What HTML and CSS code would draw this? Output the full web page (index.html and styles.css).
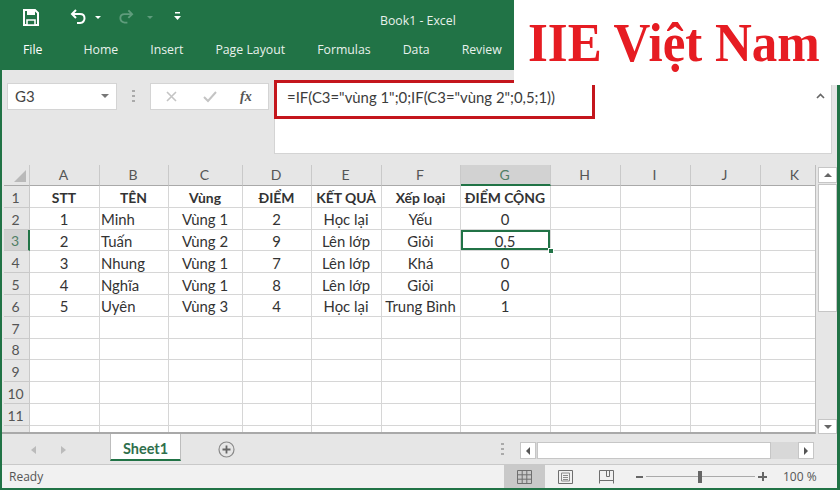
FILE: index.html
```html
<!DOCTYPE html>
<html lang="en">
<head>
    <meta charset="UTF-8">
    <title>Book1 - Excel</title>
    <link rel="stylesheet" href="styles.css">
</head>
<body>
<div class="window">
    <!-- title bar + ribbon tabs -->
    <header class="titlebar">
        <div class="qat">
            <svg class="ico-save" width="16" height="17" viewBox="0 0 16 17"><path d="M1 1h11l3 3v12H1z" fill="none" stroke="#fff" stroke-width="2"/><path d="M4 1h8v5H4z" fill="#fff"/><path d="M4 11h8v5H4z" fill="#217346" stroke="#fff" stroke-width="1.6"/></svg>
            <svg class="ico-undo" width="17" height="15" viewBox="0 0 17 15"><path d="M6 1 2 5l4 4M2 5h8c6 0 6 8 0 9H7" fill="none" stroke="#fff" stroke-width="2"/></svg>
            <span class="caret"></span>
            <svg class="ico-redo" width="16" height="15" viewBox="0 0 17 15"><path d="M11 1l4 4-4 4M15 5H7c-6 0-6 8 0 9h3" fill="none" stroke="#5f9c7c" stroke-width="2"/></svg>
            <span class="caret dim"></span>
            <svg class="ico-custom" width="7" height="9" viewBox="0 0 7 9"><path d="M1 0h5v1.500H1z" fill="#fff"/><path d="M0 4h7L3.500 8z" fill="#fff"/></svg>
            <span class="doc-title">Book1 - Excel</span>
        </div>
        <nav class="tabs">
            <span class="tab-file">File</span>
            <span>Home</span>
            <span>Insert</span>
            <span>Page Layout</span>
            <span>Formulas</span>
            <span>Data</span>
            <span>Review</span>
        </nav>
    </header>

    <!-- name box and formula bar -->
    <section class="formula-area">
        <div class="name-box">G3<span class="name-caret"></span></div>
        <span class="grip"></span>
        <div class="fx-box">
            <svg width="13" height="13" viewBox="0 0 13 13"><path d="M2 2l9 9M11 2l-9 9" stroke="#c4c4c4" stroke-width="1.600"/></svg>
            <svg width="14" height="12" viewBox="0 0 14 12"><path d="M1 6l4 4 8-9" fill="none" stroke="#c4c4c4" stroke-width="2"/></svg>
            <i class="fx">fx</i>
        </div>
        <div class="formula-box">
            <span class="formula-text">=IF(C3="vùng 1";0;IF(C3="vùng 2";0,5;1))</span>
            <svg class="collapse" width="9" height="6" viewBox="0 0 9 6"><path d="M1 5l3.500-3.500L8 5" fill="none" stroke="#666" stroke-width="1.600"/></svg>
            <div class="red-box"></div>
        </div>
    </section>

    <!-- worksheet -->
    <section class="sheet-row">
        <div class="sheet">
            <table class="cells">
                <colgroup>
                    <col class="c-row"><col class="c-a"><col class="c-b"><col class="c-c"><col class="c-d"><col class="c-e"><col class="c-f"><col class="c-g"><col class="c-h"><col class="c-h"><col class="c-h"><col class="c-h">
                </colgroup>
                <thead>
                    <tr>
                        <th class="corner"><span class="tri"></span></th>
                        <th>A</th><th>B</th><th>C</th><th>D</th><th>E</th><th>F</th><th class="sel-col">G</th><th>H</th><th>I</th><th>J</th><th>K</th>
                    </tr>
                </thead>
                <tbody>
                    <tr class="bold"><th>1</th><td class="mid">STT</td><td class="mid">TÊN</td><td class="mid">Vùng</td><td class="mid">ĐIỂM</td><td class="mid">KẾT QUẢ</td><td class="mid">Xếp loại</td><td class="mid">ĐIỂM CỘNG</td><td></td><td></td><td></td><td></td></tr>
                    <tr><th>2</th><td class="mid">1</td><td>Minh</td><td class="mid">Vùng 1</td><td class="mid">2</td><td class="mid">Học lại</td><td class="mid">Yếu</td><td class="mid">0</td><td></td><td></td><td></td><td></td></tr>
                    <tr><th class="sel-row">3</th><td class="mid">2</td><td>Tuấn</td><td class="mid">Vùng 2</td><td class="mid">9</td><td class="mid">Lên lớp</td><td class="mid">Giỏi</td><td class="mid active">0,5<span class="handle"></span></td><td></td><td></td><td></td><td></td></tr>
                    <tr><th>4</th><td class="mid">3</td><td>Nhung</td><td class="mid">Vùng 1</td><td class="mid">7</td><td class="mid">Lên lớp</td><td class="mid">Khá</td><td class="mid">0</td><td></td><td></td><td></td><td></td></tr>
                    <tr><th>5</th><td class="mid">4</td><td>Nghĩa</td><td class="mid">Vùng 1</td><td class="mid">8</td><td class="mid">Lên lớp</td><td class="mid">Giỏi</td><td class="mid">0</td><td></td><td></td><td></td><td></td></tr>
                    <tr><th>6</th><td class="mid">5</td><td>Uyên</td><td class="mid">Vùng 3</td><td class="mid">4</td><td class="mid">Học lại</td><td class="mid">Trung Bình</td><td class="mid">1</td><td></td><td></td><td></td><td></td></tr>
                    <tr><th>7</th><td></td><td></td><td></td><td></td><td></td><td></td><td></td><td></td><td></td><td></td><td></td></tr>
                    <tr><th>8</th><td></td><td></td><td></td><td></td><td></td><td></td><td></td><td></td><td></td><td></td><td></td></tr>
                    <tr><th>9</th><td></td><td></td><td></td><td></td><td></td><td></td><td></td><td></td><td></td><td></td><td></td></tr>
                    <tr><th>10</th><td></td><td></td><td></td><td></td><td></td><td></td><td></td><td></td><td></td><td></td><td></td></tr>
                    <tr><th>11</th><td></td><td></td><td></td><td></td><td></td><td></td><td></td><td></td><td></td><td></td><td></td></tr>
                    <tr><th>12</th><td></td><td></td><td></td><td></td><td></td><td></td><td></td><td></td><td></td><td></td><td></td></tr>
                </tbody>
            </table>
        </div>
        <div class="vscroll">
            <div class="sb-btn sb-up"><span class="arrow-up"></span></div>
            <div class="sb-thumb"></div>
            <div class="sb-btn sb-down"><span class="arrow-down"></span></div>
        </div>
    </section>

    <!-- sheet tabs -->
    <section class="tabbar">
        <span class="nav-arrow left"></span>
        <span class="nav-arrow right"></span>
        <div class="sheet-tab">Sheet1</div>
        <svg class="add-sheet" width="17" height="17" viewBox="0 0 17 17"><circle cx="8.500" cy="8.500" r="7.500" fill="none" stroke="#8a8a8a" stroke-width="1.200"/><path d="M8.500 4.500v8M4.500 8.500h8" stroke="#666" stroke-width="1.800"/></svg>
        <span class="grip tab-grip"></span>
        <div class="hscroll">
            <div class="hs-btn"><span class="arrow-left"></span></div>
            <div class="hs-thumb"></div>
            <div class="hs-btn"><span class="arrow-right"></span></div>
        </div>
    </section>

    <!-- status bar -->
    <footer class="statusbar">
        <span class="ready">Ready</span>
        <div class="view-btn on">
            <svg width="15" height="14" viewBox="0 0 15 14"><path d="M.5.500h14v13H.5zM5.200.500v13M9.800.500v13M.5 4.800h14M.5 9.200h14" fill="none" stroke="#6e6e6e"/></svg>
        </div>
        <div class="view-btn">
            <svg width="15" height="14" viewBox="0 0 15 14"><path d="M.5.500h14v13H.5z" fill="none" stroke="#6e6e6e"/><path d="M3.500 3h8v8h-8zM5 5.500h5M5 7.500h5M5 9.500h5" fill="none" stroke="#8a8a8a"/></svg>
        </div>
        <div class="view-btn">
            <svg width="15" height="14" viewBox="0 0 15 14"><path d="M.5 13.500V.500h14v13M.5 10.500h14M7.500.500v6M10.500.500v6M7.500 6.500h3" fill="none" stroke="#6e6e6e"/></svg>
        </div>
        <div class="zoom">
            <span class="zoom-minus"></span>
            <div class="zoom-track"><span class="zoom-thumb"></span></div>
            <span class="zoom-plus"></span>
        </div>
        <span class="zoom-pct">100 %</span>
    </footer>

    <!-- watermark pasted over the corner -->
    <div class="logo"><span class="logo-text">IIE Việt Nam</span></div>
</div>
</body>
</html>
```
FILE: styles.css
```css
* {
    box-sizing: border-box;
}
html, body {
    margin: 0;
    padding: 0;
}
body {
    width: 840px;
    height: 490px;
    overflow: hidden;
    font-family: "Open Sans", "Noto Sans", sans-serif;
    color: #444;
}
.window {
    position: relative;
    width: 840px;
    height: 490px;
    display: flex;
    flex-direction: column;
    background: #e6e6e6;
    border-left: 2px solid #217346;
    border-right: 3px solid #217346;
    border-bottom: 2px solid #217346;
}

/* title bar */
.titlebar {
    height: 70px;
    margin: 0 -3px 0 -2px;
    background: #217346;
    color: #fff;
    flex: none;
}
.qat {
    height: 40px;
    display: flex;
    align-items: center;
}
.ico-save { margin: -6px 0 0 23px; }
.ico-undo { margin: -7px 0 0 31px; }
.caret {
    width: 0;
    height: 0;
    margin: -6px 0 0 8px;
    border-left: 3px solid transparent;
    border-right: 3px solid transparent;
    border-top: 3px solid #fff;
}
.caret.dim { border-top-color: #5f9c7c; margin-left: 13px; }
.ico-redo { margin: -7px 0 0 17px; }
.ico-custom { margin: -7px 0 0 21px; }
.doc-title {
    font-size: 12.300px;
    margin: 0 0 0 199px;
    color: #e8f1ec;
}
.tabs {
    display: flex;
    gap: 32px;
    font-size: 12.300px;
    line-height: 20px;
    padding-left: 84px;
    color: #e8f1ec;
}
.tab-file {
    margin-left: -61px;
    margin-right: 9px;
    color: #fff;
}

/* formula area */
.formula-area {
    height: 95px;
    flex: none;
    display: flex;
    align-items: flex-start;
    padding: 12px 0 0 5px;
    background: #e6e6e6;
}
.name-box {
    width: 110px;
    height: 27px;
    margin-top: 1px;
    background: #fff;
    border: 1px solid #d4d4d4;
    font: 15px/25px Lato, sans-serif;
    padding-left: 7px;
    position: relative;
}
.name-caret {
    position: absolute;
    right: 7px;
    top: 10px;
    border-left: 4px solid transparent;
    border-right: 4px solid transparent;
    border-top: 4px solid #777;
}
.grip {
    width: 3px;
    height: 13px;
    margin: 8px 15px 0 15px;
    background: repeating-linear-gradient(#aaa 0 2px, transparent 2px 5px);
}
.fx-box {
    width: 119px;
    height: 27px;
    margin-top: 1px;
    background: #fff;
    border: 1px solid #d4d4d4;
    display: flex;
    align-items: center;
    gap: 25px;
    padding-left: 14px;
}
.fx {
    font: italic bold 14px "Liberation Serif", serif;
    color: #555;
    margin-left: -2px;
}
.formula-box {
    width: 558px;
    height: 72px;
    margin-left: 5px;
    background: #fff;
    border: 1px solid #d4d4d4;
    position: relative;
    padding: 2px 0 0 12px;
}
.formula-text {
    font: 14.900px/24px Lato, sans-serif;
    color: #3c3c3c;
}
.collapse {
    position: absolute;
    right: 6px;
    top: 10px;
}
.red-box {
    position: absolute;
    left: -1px;
    top: -3px;
    width: 321px;
    height: 39px;
    border: 3px solid #c4161c;
}

/* worksheet */
.sheet-row {
    height: 269px;
    flex: none;
    display: flex;
}
.sheet {
    width: 814px;
    height: 269px;
    overflow: hidden;
    padding-left: 2px;
    border-bottom: 2px solid #a9a9a9;
    border-right: 1px solid #bdbdbd;
}
/* column K runs on under the scrollbar, so the table is wider than the sheet */
.cells {
    border-collapse: separate;
    border-spacing: 0;
    table-layout: fixed;
    width: 827px;
    font: 14.900px Lato, sans-serif;
    color: #333;
}
.c-row { width: 26px; }
.c-a { width: 70px; }
.c-b { width: 69px; }
.c-c { width: 74px; }
.c-d { width: 69px; }
.c-e { width: 70px; }
.c-f { width: 79px; }
.c-g { width: 90px; }
.c-h { width: 70px; }
.cells th {
    font-weight: normal;
    font-size: 14px;
    background: #e6e6e6;
    color: #555;
    padding: 0 2px 0 0;
    border-right: 1px solid #c9c9c9;
    border-bottom: 1px solid #c9c9c9;
}
.cells thead tr {
    height: 21px;
}
.cells thead th {
    border-bottom: 1px solid #a9a9a9;
    position: relative;
    padding-bottom: 1px;
}
.cells tbody tr {
    height: 21.800px;
}
.cells tbody th {
    padding-top: 2px;
}
.cells td {
    padding: 2px 0 0 1px;
    background: #fff;
    border-right: 1px solid #d6d6d6;
    border-bottom: 1px solid #d6d6d6;
    white-space: nowrap;
    overflow: hidden;
    line-height: 18px;
}
.cells td.mid {
    text-align: center;
    padding: 2px 1px 0 0;
}
.bold td.mid {
    font-weight: bold;
    font-size: 13.900px;
    line-height: 17px;
    padding-top: 3px;
}
.corner .tri {
    position: absolute;
    right: 3px;
    bottom: 3px;
    width: 0;
    height: 0;
    border-left: 12px solid transparent;
    border-bottom: 12px solid #b9b9b9;
}
.cells th.sel-col {
    background: #d2d2d2;
    color: #4f7f65;
    border-bottom: 2px solid #217346;
}
.cells th.sel-row {
    background: #d2d2d2;
    color: #4f7f65;
    border-right: 2px solid #217346;
}
.cells td.active {
    position: relative;
    overflow: visible;
    box-shadow: inset 0 0 0 2px #217346;
}
.handle {
    position: absolute;
    right: -4px;
    bottom: -4px;
    background: #217346;
    border: 1px solid #fff;
    box-sizing: content-box;
    width: 4px;
    height: 4px;
}
.vscroll {
    width: 19px;
    margin-left: 2px;
    display: flex;
    flex-direction: column;
    padding-top: 2px;
}
.sb-btn {
    height: 16px;
    background: #fff;
    border: 1px solid #c6c6c6;
    display: flex;
    align-items: center;
    justify-content: center;
    flex: none;
}
.sb-thumb {
    height: 128px;
    background: #fff;
    border: 1px solid #c6c6c6;
    margin-top: 1px;
}
.sb-down {
    margin-top: auto;
    height: 15px;
}
.arrow-up {
    border-left: 4px solid transparent;
    border-right: 4px solid transparent;
    border-bottom: 4px solid #666;
}
.arrow-down {
    border-left: 4px solid transparent;
    border-right: 4px solid transparent;
    border-top: 4px solid #666;
}

/* sheet tabs */
.tabbar {
    height: 31px;
    flex: none;
    display: flex;
    align-items: flex-start;
    border-bottom: 1px solid #c9c9c9;
}
.nav-arrow {
    margin-top: 12px;
    border-top: 4px solid transparent;
    border-bottom: 4px solid transparent;
}
.nav-arrow.left {
    margin-left: 29px;
    border-right: 5px solid #bbb;
}
.nav-arrow.right {
    margin-left: 25px;
    border-left: 5px solid #bbb;
}
.sheet-tab {
    width: 71px;
    height: 27px;
    margin: 0 0 0 44px;
    background: #fff;
    color: #2f6f4c;
    border-left: 1px solid #bdbdbd;
    border-right: 1px solid #bdbdbd;
    border-bottom: 2px solid #217346;
    font: bold 14.500px/29px Lato, sans-serif;
    text-align: center;
}
.add-sheet {
    margin: 7px 0 0 37px;
}
.tab-grip {
    margin: 9px 0 0 266px;
}
.hscroll {
    display: flex;
    width: 294px;
    height: 17px;
    margin: 8px 0 0 16px;
    background: #d8d8d8;
}
.hs-btn {
    width: 16px;
    height: 17px;
    background: #fff;
    border: 1px solid #c6c6c6;
    display: flex;
    align-items: center;
    justify-content: center;
}
.hs-thumb {
    width: 234px;
    background: #fff;
    border: 1px solid #c6c6c6;
    margin: 0 auto 0 1px;
}
.arrow-left {
    border-top: 4px solid transparent;
    border-bottom: 4px solid transparent;
    border-right: 4px solid #555;
}
.arrow-right {
    border-top: 4px solid transparent;
    border-bottom: 4px solid transparent;
    border-left: 4px solid #555;
}

/* status bar */
.statusbar {
    flex: 1;
    display: flex;
    align-items: center;
    background: #f1f1f1;
    font-size: 12px;
    color: #555;
}
.ready {
    margin-left: 7px;
    width: 495px;
}
.view-btn {
    width: 41px;
    height: 100%;
    display: flex;
    align-items: center;
    justify-content: center;
}
.view-btn.on {
    background: #c9c9c9;
}
.zoom {
    display: flex;
    align-items: center;
    margin-left: 9px;
}
.zoom-minus {
    width: 7px;
    height: 2px;
    background: #666;
}
.zoom-track {
    width: 109px;
    height: 1px;
    margin: 0 3px;
    background: #aaa;
    display: flex;
    align-items: center;
    justify-content: center;
}
.zoom-thumb {
    width: 4px;
    height: 12px;
    background: #666;
    margin-right: 2px;
}
.zoom-plus {
    width: 9px;
    height: 9px;
    background: linear-gradient(#666, #666) center / 9px 2px no-repeat, linear-gradient(#666, #666) center / 2px 9px no-repeat;
}
.zoom-pct {
    margin-left: 16px;
    white-space: nowrap;
}

/* watermark */
.logo {
    position: absolute;
    left: 512px;
    top: 0;
    width: 326px;
    height: 85px;
    background: #fff;
    color: #e61c22;
    font: bold 51px/86px "Liberation Serif", serif;
    padding-left: 14px;
    white-space: nowrap;
    overflow: hidden;
}
.logo-text {
    display: inline-block;
    transform: scaleY(1.08);
}
```
